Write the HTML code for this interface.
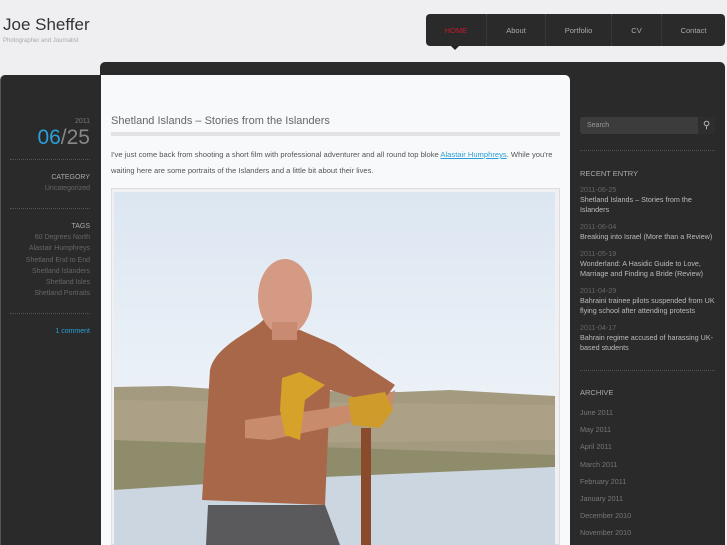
<!DOCTYPE html>
<html><head><meta charset="utf-8"><style>
*{margin:0;padding:0;box-sizing:border-box}
html,body{width:727px;height:545px;overflow:hidden}
body{background:#efeef0;font-family:"Liberation Sans",Arial,sans-serif;position:relative}
.a{position:absolute}
.nav{left:426px;top:14px;width:299px;height:32px;background:#2a2a2a;border-radius:4px;font-size:7.5px;color:#aaa}
.nav div{position:absolute;top:0;height:32px;line-height:34px;text-align:center;border-left:1px dotted #444}
.lp{left:0;top:75px;width:101px;height:470px;background:#2a2a2a;border-radius:5px 0 0 0;border-left:1px solid #555}
.top{left:100px;top:62px;width:625px;height:483px;background:#2a2a2a;border-radius:5px 5px 0 0}
.content{left:101px;top:75px;width:469px;height:470px;background:#f8f9fb;border-radius:0 5px 0 0}
.lt{right:637px;text-align:right;color:#777;font-size:7px;line-height:11.3px}
.rs{left:580px;font-size:7.2px;line-height:10px;color:#bbb;width:136px}
.dt{color:#666}
.g{height:7px}
.dot{border-top:1px dotted #555;position:absolute}
</style></head><body>
<div class="a" style="left:3px;top:15px;font-size:17px;color:#333">Joe Sheffer</div>
<div class="a" style="left:3px;top:38px;font-size:6px;color:#aaa">Photographer and Journalist</div>
<div class="a nav">
<div style="left:0;width:60px;border:none;color:#c41a2a">HOME</div>
<div style="left:60px;width:59px">About</div>
<div style="left:119px;width:66px">Portfolio</div>
<div style="left:185px;width:50px">CV</div>
<div style="left:235px;width:64px">Contact</div>
</div>
<div class="a" style="left:451px;top:46px;border-left:4px solid transparent;border-right:4px solid transparent;border-top:4px solid #222"></div>
<div class="a top"></div>
<div class="a lp"></div>
<div class="a content"></div>
<div class="a lt" style="top:116px">2011</div>
<div class="a" style="right:637px;top:126px;font-size:21px;color:#888;text-align:right"><span style="color:#2a9fd8">06</span>/25</div>
<div class="dot" style="left:10px;top:159px;width:80px"></div>
<div class="a lt" style="top:172px;color:#aaa">CATEGORY</div>
<div class="a lt" style="top:183px;color:#666">Uncategorized</div>
<div class="dot" style="left:10px;top:208px;width:80px"></div>
<div class="a lt" style="top:221px;color:#aaa">TAGS</div>
<div class="a lt" style="top:232px;color:#666">60 Degrees North<br>Alastair Humphreys<br>Shetland End to End<br>Shetland Islanders<br>Shetland Isles<br>Shetland Portraits</div>
<div class="dot" style="left:10px;top:313px;width:80px"></div>
<div class="a lt" style="top:326px;color:#2a9fd8">1 comment</div>
<div class="a" style="left:111px;top:115px;font-size:11px;color:#666">Shetland Islands – Stories from the Islanders</div>
<div class="a" style="left:111px;top:132px;width:449px;height:4px;background:#e2e2e4"></div>
<div class="a" style="left:111px;top:147px;width:450px;font-size:7.6px;line-height:16px;color:#555">I've just come back from shooting a short film with professional adventurer and all round top bloke <span style="color:#2a9fd8;text-decoration:underline">Alastair Humphreys</span>. While you're waiting here are some portraits of the Islanders and a little bit about their lives.</div>
<div class="a" style="left:111px;top:188px;width:449px;height:357px;background:#f0f0f2;border:1px solid #ddd"></div>
<svg class="a" style="left:0;top:0" width="727" height="545">
<defs><linearGradient id="sk" x1="0" y1="0" x2="0" y2="1"><stop offset="0" stop-color="#dce6f1"/><stop offset=".5" stop-color="#eaf0f7"/><stop offset="1" stop-color="#f3f6f9"/></linearGradient></defs>
<rect x="114" y="192" width="441" height="353" fill="url(#sk)"/>
<path d="M114 387 L170 386 L230 390 L400 392 L450 390 L555 396 L555 460 L114 470Z" fill="#a49a80"/>
<path d="M114 400 L555 405 L555 440 L114 445Z" fill="#b3a58a" opacity=".6"/>
<path d="M114 440 L555 455 L555 467 L114 490Z" fill="#8e8c6a"/>
<path d="M114 490 L300 478 L555 467 L555 545 L114 545Z" fill="#cbd6e0"/>
<path d="M263 320 C255 330 215 345 210 370 L202 500 L325 505 L330 390 L380 405 L395 385 L372 370 L335 345 L300 330Z" fill="#a9674a"/>
<path d="M245 420 L330 408 L380 400 L395 390 L392 410 L340 425 L270 440 L245 438Z" fill="#c88b6b"/>
<ellipse cx="285" cy="297" rx="27" ry="38" fill="#d59a84"/>
<rect x="272" y="322" width="25" height="18" fill="#c98a72"/>
<path d="M282 378 L300 372 L325 385 L305 400 L300 440 L285 435 L280 410Z" fill="#d6a22a"/>
<path d="M348 398 L385 392 L393 410 L380 428 L352 425Z" fill="#cf9b2a"/>
<rect x="361" y="428" width="10" height="117" fill="#8a4a2c"/>
<path d="M208 505 L325 505 L340 545 L206 545Z" fill="#5a5a5c"/>
</svg>
<div class="a" style="left:580px;top:117px;width:135px;height:17px;background:#3c3c3c;border-radius:3px;font-size:7px;color:#999;line-height:17px;padding-left:7px">Search</div>
<div class="a" style="left:698px;top:117px;width:17px;height:17px;background:#2e2e2e;color:#bbb;font-size:10px;text-align:center;line-height:17px">⚲</div>
<div class="dot" style="left:580px;top:150px;width:135px"></div>
<div class="a rs" style="top:169px;color:#aaa;font-size:7.5px">RECENT ENTRY</div>
<div class="a rs" style="top:185px"><span class="dt">2011-06-25</span><br>Shetland Islands – Stories from the<br>Islanders<div class="g"></div><span class="dt">2011-06-04</span><br>Breaking into Israel (More than a Review)<div class="g"></div><span class="dt">2011-05-19</span><br>Wonderland: A Hasidic Guide to Love,<br>Marriage and Finding a Bride (Review)<div class="g"></div><span class="dt">2011-04-29</span><br>Bahraini trainee pilots suspended from UK<br>flying school after attending protests<div class="g"></div><span class="dt">2011-04-17</span><br>Bahrain regime accused of harassing UK-<br>based students</div>
<div class="dot" style="left:580px;top:370px;width:135px"></div>
<div class="a rs" style="top:388px;color:#aaa;font-size:7.5px">ARCHIVE</div>
<div class="a rs" style="top:404px;line-height:17.2px;color:#777">June 2011<br>May 2011<br>April 2011<br>March 2011<br>February 2011<br>January 2011<br>December 2010<br>November 2010</div>
</body></html>
